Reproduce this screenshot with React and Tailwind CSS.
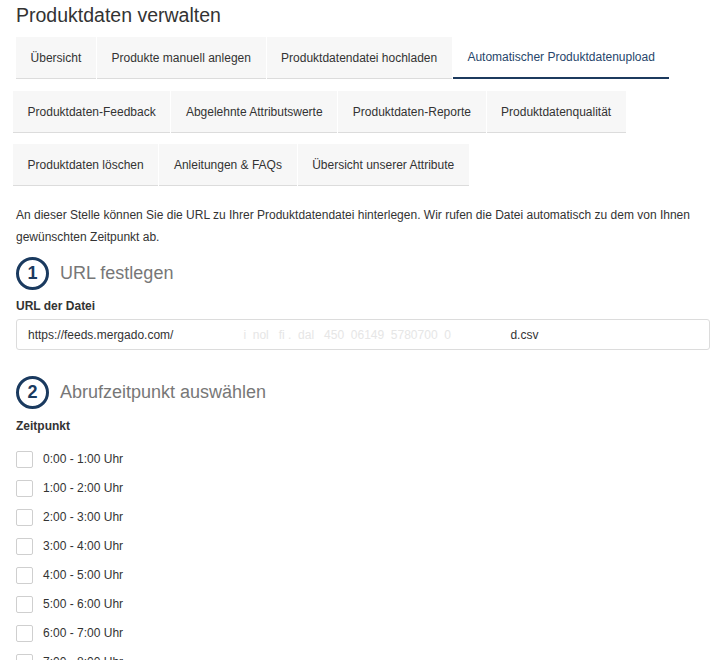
import React from "react";

const row1 = ["Übersicht", "Produkte manuell anlegen", "Produktdatendatei hochladen", "Automatischer Produktdatenupload"];
const row2 = ["Produktdaten-Feedback", "Abgelehnte Attributswerte", "Produktdaten-Reporte", "Produktdatenqualität"];
const row3 = ["Produktdaten löschen", "Anleitungen & FAQs", "Übersicht unserer Attribute"];
const slots = ["0:00 - 1:00 Uhr", "1:00 - 2:00 Uhr", "2:00 - 3:00 Uhr", "3:00 - 4:00 Uhr", "4:00 - 5:00 Uhr", "5:00 - 6:00 Uhr", "6:00 - 7:00 Uhr", "7:00 - 8:00 Uhr"];

function Tab({ label, active }) {
  if (active) {
    return (
      <div className="h-[42px] px-[14.6px] flex items-center bg-white border-b-2 border-[#1c3a5e] text-[#27466b]">
        {label}
      </div>
    );
  }
  return (
    <div className="h-[42px] px-[14.6px] flex items-center bg-[#f7f7f7] border-b border-[#dcdcdc]">
      {label}
    </div>
  );
}

function Step({ n, title }) {
  return (
    <div className="flex items-center gap-[11px]">
      <div className="w-[33px] h-[33px] rounded-full border-[3px] border-[#1a3a5f] flex items-center justify-center text-[18px] font-bold text-[#1a3a5f]">
        {n}
      </div>
      <div className="text-[18px] text-[#777]">{title}</div>
    </div>
  );
}

export default function App() {
  return (
    <div className="w-[722px] h-[660px] overflow-hidden bg-white font-['Liberation_Sans',Arial,sans-serif] text-[#333] text-[12px]">
      <div className="pl-4 pr-3">
        <h1 className="pt-1 text-[19.5px] leading-[22px]">Produktdaten verwalten</h1>

        <div className="mt-[11px] flex gap-px">
          {row1.map((t, i) => (
            <Tab key={t} label={t} active={i === 3} />
          ))}
        </div>
        <div className="mt-[12px] -ml-[3px] flex gap-px">
          {row2.map((t) => (
            <Tab key={t} label={t} />
          ))}
        </div>
        <div className="mt-[11px] -ml-[3px] flex gap-px">
          {row3.map((t) => (
            <Tab key={t} label={t} />
          ))}
        </div>

        <p className="mt-[18px] leading-[22px]">
          An dieser Stelle können Sie die URL zu Ihrer Produktdatendatei hinterlegen. Wir rufen die Datei automatisch zu dem von Ihnen gewünschten Zeitpunkt ab.
        </p>

        <div className="mt-[9px]">
          <Step n="1" title="URL festlegen" />
        </div>
        <div className="mt-[8px] font-bold leading-[16px]">URL der Datei</div>
        <div className="mt-[5px] h-[31px] border border-[#dcdcdc] rounded-[3px] px-[11px] flex items-center whitespace-nowrap">
          https://feeds.mergado.com/
          <span className="inline-block w-[337px] overflow-hidden whitespace-pre text-[#e6e6e6]">
            {"                     i  nol   fi .  dal   450  06149  5780700  0              "}
          </span>
          d.csv
        </div>

        <div className="mt-[26px]">
          <Step n="2" title="Abrufzeitpunkt auswählen" />
        </div>
        <div className="mt-[9px] font-bold leading-[16px]">Zeitpunkt</div>

        <div className="mt-[17px]">
          {slots.map((s) => (
            <div key={s} className="h-[29px] flex items-start gap-[10px]">
              <span className="w-[17px] h-[17px] border border-[#cfcfcf] rounded-[2px] bg-white shrink-0" />
              <span className="leading-[17px]">{s}</span>
            </div>
          ))}
        </div>
      </div>
    </div>
  );
}
